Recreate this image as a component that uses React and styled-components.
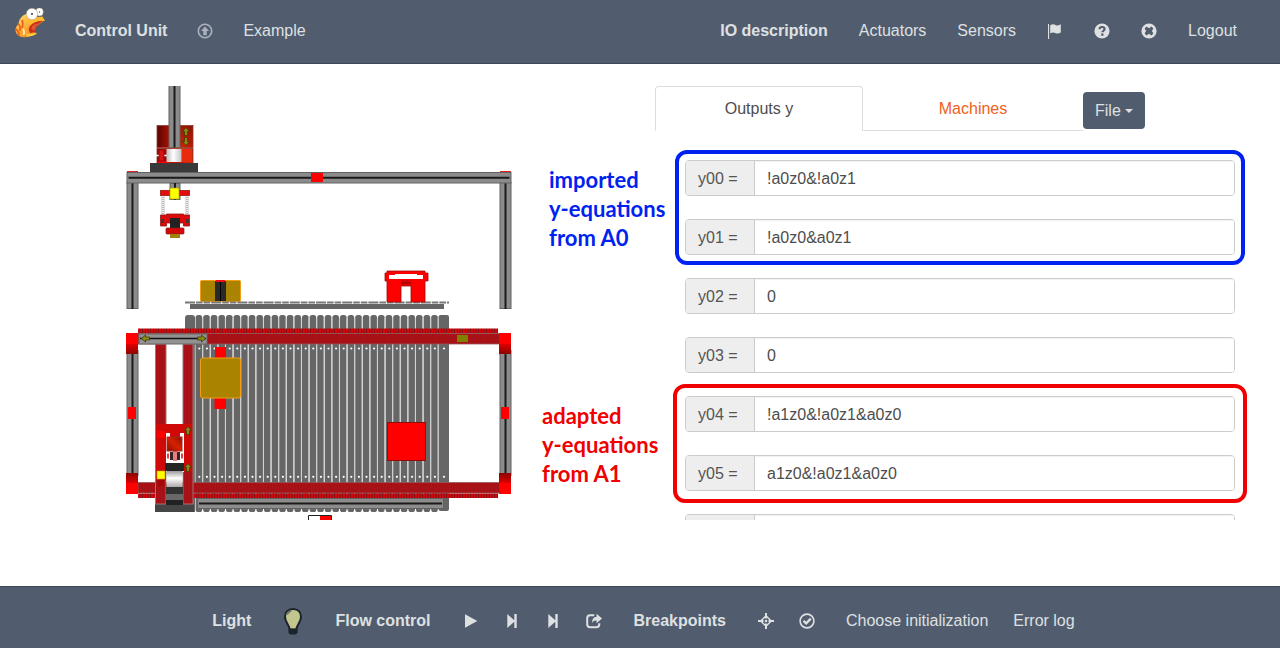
import React from "react";
import styled, { createGlobalStyle, css } from "styled-components";

const GlobalStyle = createGlobalStyle`
  *, *::before, *::after { box-sizing: border-box; }
  body {
    margin: 0;
    background: #fff;
    color: #4d4d4d;
    font: 16px/24px "Liberation Sans", Arial, sans-serif;
  }
  button, input { font: inherit; }
`;

const Page = styled.div`
  display: flex;
  flex-direction: column;
  height: 100vh;
`;

const bar = css`
  display: flex;
  align-items: center;
  flex: none;
  background: #515d6e;
  color: #dfe0e2;
`;

const Header = styled.header`
  ${bar}
  justify-content: space-between;
  height: 64px;
  padding: 0 43px 2px 15px;
  border-bottom: 1px solid #3c4757;
`;

const Footer = styled.footer`
  ${bar}
  justify-content: center;
  gap: 25px;
  height: 62px;
  padding: 6px 0 0;
  border-top: 1px solid #3c4757;
`;

const Nav = styled.nav`
  display: flex;
  align-items: center;
  gap: ${(p) => p.$gap}px;
`;

const NavLink = styled.a`
  color: inherit;
  text-decoration: none;
  white-space: nowrap;
  font-weight: ${(p) => (p.$strong ? 700 : 400)};
`;

const BarTitle = styled.strong`
  padding: 0 7px;
  white-space: nowrap;
`;

const FooterLinks = styled.div`
  display: flex;
  gap: 25px;
  padding-left: 6px;
`;

const IconButton = styled.button`
  display: flex;
  padding: 0;
  border: 0;
  background: none;
  color: ${(p) => (p.$muted ? "#aab1bc" : "inherit")};
  cursor: pointer;
`;

const LogoLink = styled.a`
  display: flex;
  margin-bottom: 16px;
`;

const Main = styled.main`
  display: grid;
  grid-template-columns: 530fr 750fr;
  flex: 1;
  min-height: 0;
  padding: 22px 0 66px;
`;

const MachineView = styled.section`
  min-width: 0;
  overflow: hidden;
  svg { display: block; width: 100%; }
`;

const Editor = styled.section`
  display: flex;
  flex-direction: column;
  min-width: 0;
  overflow: hidden;
`;

const TabBar = styled.div`
  display: flex;
  align-items: flex-start;
  flex: none;
  height: 45px;
  padding-left: 125px;
`;

const Tab = styled.button`
  width: ${(p) => (p.$active ? 208 : 220)}px;
  height: 45px;
  padding: 0;
  cursor: pointer;
  background: #fff;
  color: ${(p) => (p.$active ? "#4d4d4d" : "#f1611b")};
  border: 1px solid;
  border-color: ${(p) => (p.$active ? "#ddd #ddd #fff" : "#fff #fff #ddd")};
  border-left-width: ${(p) => (p.$active ? 1 : 0)}px;
  border-right-width: ${(p) => (p.$active ? 1 : 0)}px;
  border-radius: ${(p) => (p.$active ? "4px 4px 0 0" : "0")};
`;

const FileButton = styled.button`
  display: flex;
  align-items: center;
  gap: 4px;
  height: 37px;
  margin-top: 6px;
  padding: 0 12px;
  border: 0;
  border-radius: 4px;
  background: #515d6e;
  color: #dfe0e2;
  cursor: pointer;
`;

const Caret = styled.span`
  border: 4px solid transparent;
  border-top-color: currentColor;
  border-bottom: 0;
`;

const EquationList = styled.form`
  display: flex;
  flex-direction: column;
  gap: 23px;
  flex: 1;
  min-height: 0;
  padding: 29px 45px 0 0;
  overflow: hidden;
`;

const EquationGroup = styled.div`
  display: grid;
  grid-template-columns: 155px 1fr;
  flex: none;
`;

const Note = styled.p`
  margin: 0;
  padding: 5px 0 0 ${(p) => p.$indent}px;
  color: ${(p) => p.$color};
  font: 700 22px/29px Lato, "Open Sans", sans-serif;
  white-space: pre-line;
`;

const Fields = styled.div`
  position: relative;
  grid-column: 2;
  display: flex;
  flex-direction: column;
  gap: 23px;
`;

const Outline = styled.div`
  position: absolute;
  inset: -${(p) => p.$spread}px;
  border: 4px solid ${(p) => p.$color};
  border-radius: 12px;
  pointer-events: none;
`;

const Field = styled.div`
  display: flex;
  height: 36px;
  border: 1px solid #ccc;
  border-radius: 4px;
  overflow: hidden;
`;

const FieldLabel = styled.label`
  width: 69px;
  padding: 6px 12px 4px;
  border-right: 1px solid #ccc;
  background: #eee;
  color: #555;
`;

const FieldInput = styled.input`
  flex: 1;
  min-width: 0;
  padding: 2px 12px 0;
  border: 0;
  outline: 0;
  background: #fff;
  color: #4d4d4d;
  box-shadow: inset 0 1px 1px rgba(0, 0, 0, 0.06);
`;

const Glyph = ({ children }) => (
  <svg width="16" height="16" viewBox="0 0 16 16" fill="currentColor" aria-hidden="true">
    {children}
  </svg>
);

const UploadGlyph = () => (
  <Glyph>
    <circle cx="8" cy="8" r="6.7" fill="none" stroke="currentColor" strokeWidth="1.6" />
    <path d="M8 3.6 12 8H9.7v4.2H6.3V8H4z" />
  </Glyph>
);
const FlagGlyph = () => (
  <Glyph>
    <path d="M1 1h1.1v15H1zM3.200 2.400c2-1.600 3.700-1.400 5.300-.5 1.800 1 3.400.5 5.300-.6v8.200c-2 1.200-3.800 1.400-5.600.4-1.600-.8-3.200-.7-5 .7z" />
  </Glyph>
);
const HelpGlyph = () => (
  <Glyph>
    <circle cx="8" cy="8" r="7.6" />
    <path d="M5.500 6.300c0-1.500.9-2.300 2.500-2.300s2.600.8 2.600 2.100c0 1.600-2.200 1.700-2.200 3.200" fill="none" stroke="#515d6e" strokeWidth="2.1" />
    <path d="M7.200 10.500h2.300v2.200H7.200z" fill="#515d6e" />
  </Glyph>
);
const RemoveGlyph = () => (
  <Glyph>
    <circle cx="8" cy="8" r="7.6" />
    <path d="M5.500 3.600 8 5.200l2.500-1.600 1.900 1.900L10.900 8l1.500 2.500-1.900 1.900L8 10.800l-2.500 1.600-1.900-1.900L5.100 8 3.600 5.500z" fill="#515d6e" />
  </Glyph>
);
const PlayGlyph = () => (
  <Glyph><path d="M2 1.200 14.300 8 2 14.800z" /></Glyph>
);
const StepGlyph = () => (
  <Glyph><path d="M3.300 1.100 10.300 7.200V1h2.400v14h-2.400V8.800l-7 6.100z" /></Glyph>
);
const ShareGlyph = () => (
  <Glyph>
    <path d="M8.300 2.200H4.200Q1.200 2.200 1.200 5.200v6.100q0 3 3 3h6.100q3 0 3-3v-1" fill="none" stroke="currentColor" strokeWidth="2" />
    <path d="M10.600.7 16 5.500l-5.400 4.800V7.500C8.200 7.400 6.900 8.200 6 10c0-3.800 1.600-5.900 4.600-6.200z" />
  </Glyph>
);
const CrosshairGlyph = () => (
  <Glyph>
    <path d="M7 0h2v5.500H7zM7 10.500h2V16H7zM0 7h5.500v2H0zM10.500 7H16v2h-5.500z" />
    <path d="M8 2.800 13.200 8 8 13.200 2.800 8z" fill="none" stroke="currentColor" strokeWidth="1.500" />
    <circle cx="8" cy="8" r="1.300" />
  </Glyph>
);
const CheckGlyph = () => (
  <Glyph>
    <circle cx="8" cy="8" r="6.900" fill="none" stroke="currentColor" strokeWidth="1.600" />
    <path d="m4.500 7.800 2.700 2.600 4.600-4.800" fill="none" stroke="currentColor" strokeWidth="2.300" />
  </Glyph>
);

const BulbIcon = () => (
  <svg width="20" height="28" viewBox="0 0 20 28" aria-hidden="true">
    <path d="M10 2c5 0 8 3.300 8 8 0 4.800-4.200 7.500-4.700 12.500H6.700C6.200 17.500 2 14.800 2 10c0-4.700 3-8 8-8z" fill="#c3c78e" stroke="#1c242b" strokeWidth="2" />
    <path d="M5.500 21.700h9v4.200l-2 1.600h-5l-2-1.600z" fill="#1c242b" />
    <path d="M4.300 7.500c.6-2 1.800-3 3.900-3.400" fill="none" stroke="#666e64" strokeWidth="1.500" />
  </svg>
);

const BirdLogo = () => (
  <svg width="30" height="30" viewBox="0 0 30 30" role="img" aria-label="Home">
    <defs>
      <linearGradient id="body" x1="0" y1="0" x2="1" y2="1">
        <stop offset="0" stopColor="#ffe07a" />
        <stop offset=".4" stopColor="#fdb53a" />
        <stop offset="1" stopColor="#ee6a14" />
      </linearGradient>
    </defs>
    <path d="M11 6C6 8 4 12 3.500 16 1 18 0 21 .8 24c1 3 3.500 4.500 6.200 5 3 .5 6 .2 9-1l6-2c-2.500-1.500-3.500-4-1-7l8-6.500-8-4z" fill="url(#body)" />
    <path d="M3.500 16c1.500 1.500 2 4 1.500 7M1 21c2 1.500 3 4 3 6.500M7 12c1.500 3 1 5 0 8" fill="none" stroke="#e8601a" strokeWidth="1.700" />
    <path d="M8 21c1.500 2 1.500 4 .5 6" fill="none" stroke="#fff0b0" strokeWidth="1.500" />
    <path d="M27.500 13c-5-.5-9 1-12 4.500-2.500 3-2 6 0 7.500l5-1c-.5-4 2-7 7-11z" fill="#c8301a" />
    <path d="M17 18c2.500-2 5-2.700 7.500-2.500-3 2-4.500 4-5 7-2.500 0-3.500-2-2.500-4.500z" fill="#e2552b" />
    <path d="M13 12c5-1 9-3.500 14.500-3.500L30 13c-5-.8-9.500-.5-15 4z" fill="#fdbb2d" />
    <path d="M11 25.500c4 1.500 7-1 11-.5-2 2.500-6 3.500-10 3.500z" fill="#ffcf3f" />
    <ellipse cx="24.500" cy="3.900" rx="3.800" ry="4" fill="#fff" stroke="#a89878" strokeWidth=".5" />
    <ellipse cx="17" cy="6" rx="5.700" ry="5.700" fill="#fff" stroke="#a89878" strokeWidth=".5" />
    <circle cx="17" cy="6" r="1" fill="#333" />
    <circle cx="24.500" cy="4" r=".7" fill="#555" />
  </svg>
);

/* Aluminium profile with a dark groove along its middle. */
const Profile = ({ x, y, w, h }) => (
  <g>
    <rect x={x + 0.5} y={y + 0.5} width={w - 1} height={h - 1} fill="#8c8c8c" stroke="#626262" />
    {w > h ? (
      <rect x={x + 2} y={y + h / 2 - 1} width={w - 4} height="2" fill="#1a1a1a" />
    ) : (
      <rect x={x + w / 2 - 1} y={y} width="2" height={h} fill="#1a1a1a" />
    )}
  </g>
);

const Arrow = ({ x, y, turn }) => (
  <path d="M0-4.500 3.500-.5H1.500v4h-3v-4h-2z" transform={`translate(${x} ${y}) rotate(${turn})`} fill="#8b8b14" stroke="#3d3a05" strokeWidth=".8" />
);

const slats = Array.from({ length: 32 }, (_, i) => 195.6 + i * 7.6);

const MachineDrawing = () => (
  <svg viewBox="0 86 530 434" role="img" aria-label="Portal crane with conveyor">
    <defs>
      <linearGradient id="darkRed"><stop offset="0" stopColor="#5a0500" /><stop offset="1" stopColor="#a81205" /></linearGradient>
      <linearGradient id="orangeRed" x1="1" y1="0" x2="0" y2="1"><stop offset="0" stopColor="#8b1200" /><stop offset=".5" stopColor="#d92100" /><stop offset="1" stopColor="#8a0e00" /></linearGradient>
      <linearGradient id="steel"><stop offset="0" stopColor="#bdbdbd" /><stop offset=".45" stopColor="#fff" /><stop offset="1" stopColor="#c5c5c5" /></linearGradient>
      <linearGradient id="steelDown" x1="0" y1="0" x2="0" y2="1"><stop offset="0" stopColor="#999" /><stop offset=".45" stopColor="#fff" /><stop offset="1" stopColor="#aaa" /></linearGradient>
      <linearGradient id="corner" x1="0" y1="0" x2="0" y2="1"><stop offset=".5" stopColor="#f00" /><stop offset=".52" stopColor="#e00000" /><stop offset="1" stopColor="#8c0500" /></linearGradient>
      <linearGradient id="cornerUp" x1="0" y1="1" x2="0" y2="0"><stop offset=".5" stopColor="#f00" /><stop offset=".52" stopColor="#d00" /><stop offset="1" stopColor="#8c0500" /></linearGradient>
      <pattern id="teeth" width="8" height="5" patternUnits="userSpaceOnUse">
        <rect width="8" height="5" fill="#d00b10" />
        <path d="M1.500 0v5M4 0v5M6.500 0v5" stroke="#850e12" strokeWidth="1" />
      </pattern>
      <pattern id="rail" width="3" height="3" patternUnits="userSpaceOnUse">
        <rect width="3" height="3" fill="#ae1116" />
        <path d="M1 0v3" stroke="#9b1115" />
      </pattern>
    </defs>

    {/* front view: portal frame */}
    <rect x="127" y="171" width="11" height="2" fill="#d22" />
    <rect x="500" y="171" width="11" height="2" fill="#d22" />
    <Profile x={126.5} y={182} w={12} h={127} />
    <Profile x={499.5} y={182} w={12} h={127} />
    <rect x="157" y="125.500" width="36" height="38" fill="url(#orangeRed)" stroke="#873c35" strokeWidth=".8" />
    <rect x="157.500" y="126" width="12" height="21" fill="url(#darkRed)" />
    <Arrow x={186} y={132} turn={0} />
    <Arrow x={186} y={141} turn={180} />
    <Profile x={168.5} y={84} w={12} h={64} />
    <path d="M157 148h36" stroke="#8a6661" />
    <rect x="157" y="149" width="9" height="14" fill="#a40c0c" />
    <rect x="182" y="149" width="10" height="13" fill="#e82b0c" />
    <path d="M156 155.500h11" stroke="#fff" strokeWidth="1.500" />
    <rect x="159" y="150" width="5" height="11" fill="#d91313" stroke="#700" strokeWidth=".6" />
    <rect x="158" y="161.500" width="13" height="2" fill="#f00" />
    <rect x="166.500" y="149" width="15" height="13" fill="url(#steel)" />
    <rect x="150" y="163" width="48" height="9" fill="#393939" />
    <Profile x={126.5} y={172} w={385} h={11.5} />
    <rect x="311" y="173" width="12" height="9" fill="#f00" />

    {/* gripper */}
    <Profile x={169.5} y={183} w={11} h={17} />
    <rect x="160.500" y="190.500" width="29" height="5" fill="#e30b0b" stroke="#9a1515" strokeWidth=".8" />
    <rect x="170" y="188" width="9" height="11" fill="#ff0" stroke="#a69a12" strokeWidth=".7" />
    <path d="M163 196v19M187 196v19" stroke="#bbb" strokeWidth="3" />
    <path d="M163 196v19M187 196v19" stroke="#fff" strokeWidth="1.500" strokeDasharray="1 1" />
    <path d="M160.500 215h6v-1h17v1h6v11h-6v-3h-17v3h-6z" fill="#dc0b0b" stroke="#941414" strokeWidth=".8" />
    <path d="M161 219h3v4h-3zm25 0h3v4h-3z" fill="#4b3333" />
    <rect x="170" y="218" width="10" height="10" fill="#222" />
    <rect x="166" y="228" width="18" height="6" rx="1" fill="#d20808" stroke="#8c1616" strokeWidth=".7" />
    <rect x="170" y="234" width="10" height="4" fill="#9b8410" />

    {/* workpieces on the shelf */}
    <rect x="200.500" y="280.500" width="40" height="21" rx="1" fill="#aa8400" stroke="#f39c18" />
    <rect x="215" y="281" width="11" height="20" fill="#292929" />
    <path d="M220.500 282v19" stroke="#000" />
    <path d="M216 281h9" stroke="#e11" strokeWidth="2" />
    <path d="M185 302.500h264" stroke="#777" strokeWidth="2" strokeDasharray="10 1 6.600 1 6.600 1" />
    <rect x="190" y="304" width="254" height="5" fill="#656565" />
    <path d="M387 271h38v2h3v8h-3v21h-14v-16h-10v16h-14v-21h-2v-8h2z" fill="#f00" stroke="#9f0b0b" strokeWidth=".8" />
    <path d="M389 275h6v-1h22v1h6v4h-34z" fill="#fff" />
    <rect x="401" y="280" width="10" height="6" fill="#d40505" />
    <path d="M401 283h10" stroke="#900" />

    {/* conveyor seen from above */}
    <path d="M185 512V318q0-3 3-3h4q3 0 3 3v194z" fill="#666" />
    {slats.map((x) => (
      <g key={x}>
        <rect x={x} y="315" width="6.600" height="197" rx="2.600" fill="#666" />
        <circle cx={x + 3.7} cy="348.500" r="1.100" fill="#fff" />
        <circle cx={x + 3.7} cy="476.800" r="1.100" fill="#fff" />
      </g>
    ))}
    <rect x="438.500" y="315" width="10.500" height="196" rx="2" fill="#666" />
    <path d="M195 344V482" stroke="#999" />
    {slats.map((x) => (
      <path key={x} d={`M${x + 7} 318V508`} stroke="#ccc" strokeWidth="1" />
    ))}
    <circle cx="444" cy="348.500" r="1.100" fill="#fff" />
    <circle cx="444" cy="476.800" r="1.100" fill="#fff" />
    <Profile x={197} y={498} w={247} h={11} />

    {/* side profiles and travel rails */}
    <Profile x={126.5} y={350} w={12} h={126} />
    <Profile x={499.5} y={350} w={12} h={126} />
    <rect x="138" y="328.500" width="360" height="5" fill="url(#teeth)" />
    <rect x="138" y="333.500" width="362" height="10.500" fill="url(#rail)" stroke="#93595a" strokeWidth=".8" />
    <rect x="138" y="482.500" width="362" height="10.500" fill="url(#rail)" stroke="#93595a" strokeWidth=".8" />
    <rect x="138" y="493.500" width="360" height="4.500" fill="url(#teeth)" />
    <rect x="126" y="333" width="12" height="21" fill="url(#corner)" />
    <rect x="499" y="333" width="12" height="21" fill="url(#corner)" />
    <rect x="126" y="473" width="12" height="21" fill="url(#cornerUp)" />
    <rect x="499" y="473" width="12" height="21" fill="url(#cornerUp)" />
    <rect x="128" y="407" width="8" height="12" fill="#f00" />
    <rect x="501" y="407" width="8" height="12" fill="#f00" />
    <rect x="457" y="335" width="11" height="7" fill="#828000" />

    {/* travelling gantry */}
    <rect x="166" y="344" width="17" height="80" fill="#fff" />
    <rect x="155" y="504" width="39" height="8" fill="#454545" />
    <rect x="155.500" y="344" width="10.500" height="160" fill="url(#rail)" stroke="#a17577" />
    <rect x="183" y="344" width="10" height="160" fill="url(#rail)" stroke="#a17577" />
    <rect x="139" y="334" width="68" height="10" fill="#929292" stroke="#666" />
    <path d="M140 338.500h66" stroke="#111" strokeWidth="1.500" />
    <Arrow x={146} y={338.5} turn={-90} />
    <Arrow x={201} y={338.5} turn={90} />
    <path d="M156 424h36v48h-9v-35h-17v43h-10z" fill="#cf0808" />
    <rect x="157" y="431" width="8" height="7" fill="#f00" />
    <path d="M166 433h4v4h10v-4h4v39h-18z" fill="#fff" />
    <rect x="167" y="437" width="15" height="14" fill="url(#orangeRed)" stroke="#a32b1e" />
    <path d="M170 452h3v8h-3zm7 0h3v8h-3z" fill="#382323" />
    <path d="M174 451v10M176 451v10" stroke="#c00" />
    <path d="M167 456h2M181 456h2" stroke="#d44" strokeWidth="5" />
    <rect x="165" y="463" width="19" height="8" fill="#252525" />
    <rect x="166.500" y="471" width="16" height="16" fill="url(#steelDown)" />
    <rect x="166" y="487" width="17" height="7" fill="#333" />
    <rect x="166" y="494" width="17" height="6" fill="#696969" />
    <rect x="166" y="500" width="17" height="5" fill="#222" />
    <rect x="157" y="471" width="8" height="8" fill="#ff0" stroke="#c5a305" strokeWidth=".6" />
    <rect x="158" y="480" width="6" height="6" fill="#a50707" />
    <Arrow x={188} y={431} turn={0} />
    <Arrow x={188} y={468} turn={0} />

    {/* workpieces on the conveyor */}
    <rect x="215" y="347" width="11" height="11" fill="#f00" />
    <rect x="214.500" y="398" width="11.500" height="11" fill="#f00" />
    <rect x="200.500" y="358" width="40" height="40" rx="2" fill="#aa8400" stroke="#f39c18" />
    <rect x="387.500" y="422.500" width="38" height="38" fill="#f00" stroke="#8d0d0d" />

    <path d="M308.500 522v-6.500h23V522" fill="#fff" stroke="#222" />
    <rect x="320" y="516" width="11" height="5" fill="#f00" />
  </svg>
);

const groups = [
  {
    note: "imported\ny-equations\nfrom A0",
    color: "#0022f0",
    indent: 19,
    spread: 10,
    rows: [["y00", "!a0z0&!a0z1"], ["y01", "!a0z0&a0z1"]],
  },
  { rows: [["y02", "0"], ["y03", "0"]] },
  {
    note: "adapted\ny-equations\nfrom A1",
    color: "#f00000",
    indent: 12,
    spread: 12,
    rows: [["y04", "!a1z0&!a0z1&a0z0"], ["y05", "a1z0&!a0z1&a0z0"]],
  },
];

export default function App() {
  return (
    <>
      <GlobalStyle />
      <Page>
        <Header>
          <Nav aria-label="Project" $gap={30}>
            <LogoLink href="#home"><BirdLogo /></LogoLink>
            <NavLink href="#control" $strong>Control Unit</NavLink>
            <IconButton $muted aria-label="Upload"><UploadGlyph /></IconButton>
            <NavLink href="#example">Example</NavLink>
          </Nav>
          <Nav aria-label="Main" $gap={31}>
            <NavLink href="#io" $strong>IO description</NavLink>
            <NavLink href="#actuators">Actuators</NavLink>
            <NavLink href="#sensors">Sensors</NavLink>
            <IconButton aria-label="Language"><FlagGlyph /></IconButton>
            <IconButton aria-label="Help"><HelpGlyph /></IconButton>
            <IconButton aria-label="Close"><RemoveGlyph /></IconButton>
            <NavLink href="#logout">Logout</NavLink>
          </Nav>
        </Header>

        <Main>
          <MachineView><MachineDrawing /></MachineView>
          <Editor>
            <TabBar role="tablist">
              <Tab role="tab" aria-selected="true" $active>Outputs y</Tab>
              <Tab role="tab" aria-selected="false">Machines</Tab>
              <FileButton aria-haspopup="menu">File<Caret /></FileButton>
            </TabBar>
            <EquationList>
              {groups.map((group) => (
                <EquationGroup key={group.rows[0][0]}>
                  {group.note && (
                    <Note $color={group.color} $indent={group.indent}>{group.note}</Note>
                  )}
                  <Fields>
                    {group.rows.map(([name, value]) => (
                      <Field key={name}>
                        <FieldLabel htmlFor={name}>{name} =</FieldLabel>
                        <FieldInput id={name} defaultValue={value} />
                      </Field>
                    ))}
                    {group.note && <Outline $color={group.color} $spread={group.spread} />}
                  </Fields>
                </EquationGroup>
              ))}
              <EquationGroup>
                <Fields>
                  <Field>
                    <FieldLabel htmlFor="next" aria-label="Next equation" />
                    <FieldInput id="next" />
                  </Field>
                </Fields>
              </EquationGroup>
            </EquationList>
          </Editor>
        </Main>

        <Footer>
          <BarTitle>Light</BarTitle>
          <IconButton aria-label="Toggle light"><BulbIcon /></IconButton>
          <BarTitle>Flow control</BarTitle>
          <IconButton aria-label="Play"><PlayGlyph /></IconButton>
          <IconButton aria-label="Step"><StepGlyph /></IconButton>
          <IconButton aria-label="Step over"><StepGlyph /></IconButton>
          <IconButton aria-label="Export"><ShareGlyph /></IconButton>
          <BarTitle>Breakpoints</BarTitle>
          <IconButton aria-label="Set breakpoint"><CrosshairGlyph /></IconButton>
          <IconButton aria-label="Confirm breakpoints"><CheckGlyph /></IconButton>
          <FooterLinks>
            <NavLink href="#init">Choose initialization</NavLink>
            <NavLink href="#log">Error log</NavLink>
          </FooterLinks>
        </Footer>
      </Page>
    </>
  );
}
